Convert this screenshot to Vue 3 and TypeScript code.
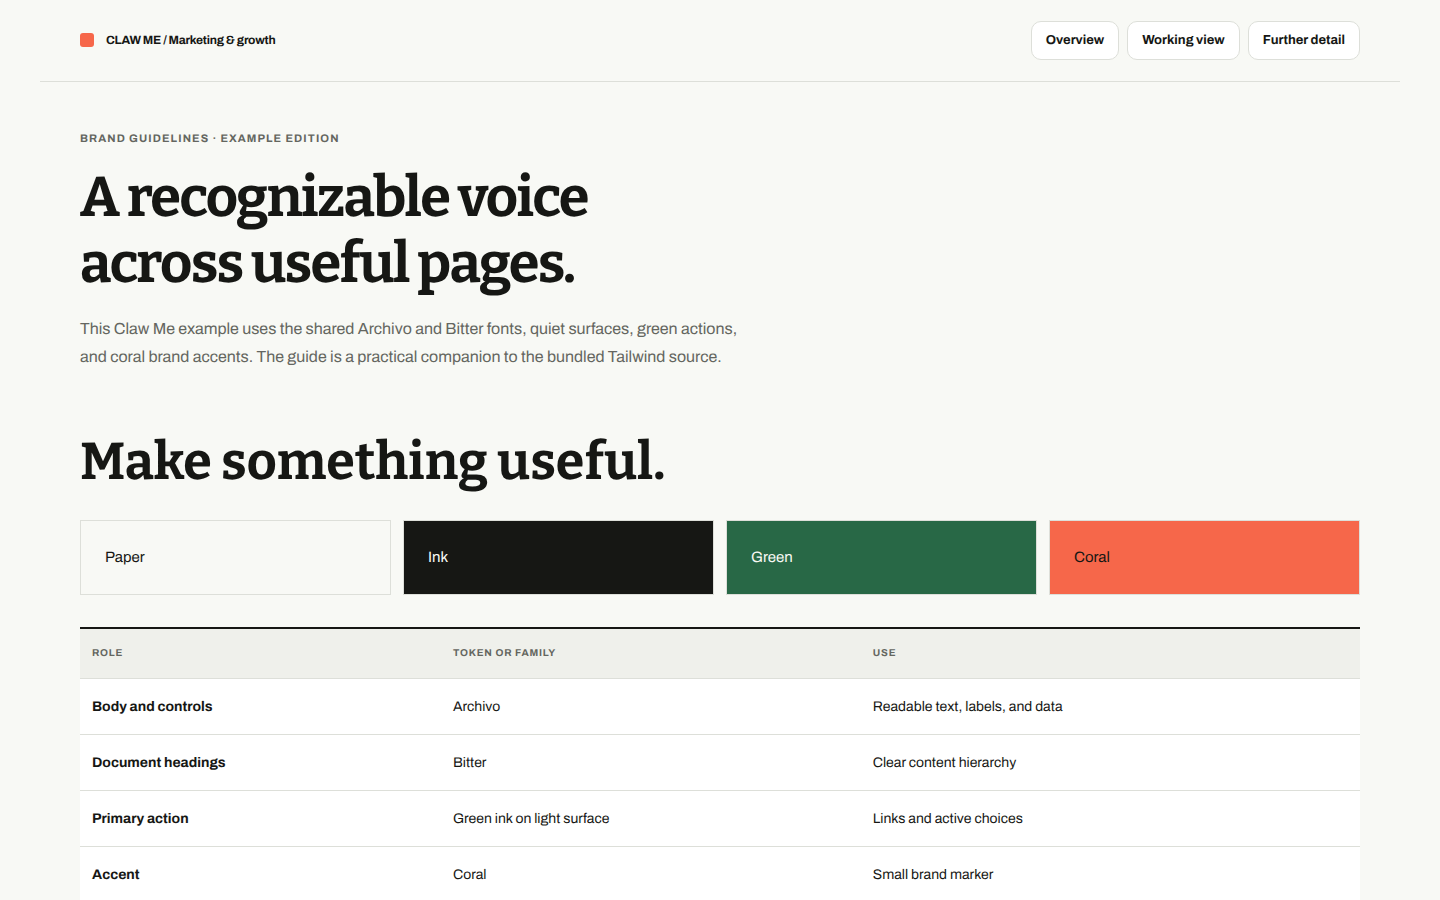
<script setup lang="ts">
interface Swatch {
  name: string
  tone: string
}

interface Row {
  role: string
  token: string
  use: string
}

const links: string[] = ['Overview', 'Working view', 'Further detail']

const swatches: Swatch[] = [
  { name: 'Paper', tone: 'paper' },
  { name: 'Ink', tone: 'ink' },
  { name: 'Green', tone: 'green' },
  { name: 'Coral', tone: 'coral' },
]

const rows: Row[] = [
  { role: 'Body and controls', token: 'Archivo', use: 'Readable text, labels, and data' },
  { role: 'Document headings', token: 'Bitter', use: 'Clear content hierarchy' },
  { role: 'Primary action', token: 'Green ink on light surface', use: 'Links and active choices' },
  { role: 'Accent', token: 'Coral', use: 'Small brand marker' },
]
</script>

<template>
  <div class="page">
    <header class="topbar">
      <div class="brand">
        <span class="mark" aria-hidden="true"></span>
        <span>CLAW ME / Marketing &amp; growth</span>
      </div>
      <nav class="nav" aria-label="Sections">
        <a v-for="link in links" :key="link" class="nav-link" href="#">{{ link }}</a>
      </nav>
    </header>

    <main class="content">
      <section class="intro">
        <p class="eyebrow">Brand guidelines · Example edition</p>
        <h1>A recognizable voice<br />across useful pages.</h1>
        <p class="lead">
          This Claw Me example uses the shared Archivo and Bitter fonts, quiet surfaces, green actions,<br />
          and coral brand accents. The guide is a practical companion to the bundled Tailwind source.
        </p>
      </section>

      <h2>Make something useful.</h2>

      <div class="swatches">
        <div v-for="swatch in swatches" :key="swatch.name" class="swatch" :class="swatch.tone">
          {{ swatch.name }}
        </div>
      </div>

      <table class="tokens">
        <colgroup>
          <col class="col-role" />
          <col class="col-token" />
          <col />
        </colgroup>
        <thead>
          <tr>
            <th scope="col">Role</th>
            <th scope="col">Token or family</th>
            <th scope="col">Use</th>
          </tr>
        </thead>
        <tbody>
          <tr v-for="row in rows" :key="row.role">
            <th scope="row">{{ row.role }}</th>
            <td>{{ row.token }}</td>
            <td>{{ row.use }}</td>
          </tr>
        </tbody>
      </table>
    </main>
  </div>
</template>

<style>
body {
  margin: 0;
  background: #f8f9f5;
}
</style>

<style scoped>
.page {
  padding: 0 40px 48px;
  background: #f8f9f5;
  color: #161714;
  font-family: Archivo, "Liberation Sans", Arial, sans-serif;
  text-rendering: geometricPrecision;
}

.topbar {
  display: flex;
  align-items: flex-start;
  justify-content: space-between;
  padding: 21px 40px;
  border-bottom: 1px solid #dddfd9;
}

.brand {
  display: flex;
  align-items: center;
  gap: 12px;
  font-size: 12px;
  font-weight: 700;
  letter-spacing: -0.02em;
  line-height: 38px;
}

.mark {
  width: 14px;
  height: 14px;
  border-radius: 3px;
  background: #f6674a;
}

.nav {
  display: flex;
  gap: 8px;
}

.nav-link {
  padding: 8px 14px;
  border: 1px solid #dddfd9;
  border-radius: 10px;
  background: #ffffff;
  color: inherit;
  font-size: 13px;
  font-weight: 700;
  line-height: 21px;
  text-decoration: none;
}

.content {
  padding: 48px 40px 0;
}

.eyebrow {
  margin: 0;
  color: #646660;
  font-size: 11px;
  font-weight: 700;
  letter-spacing: 0.1em;
  line-height: 18px;
  text-transform: uppercase;
}

h1,
h2 {
  margin: 0;
  font-family: Bitter, "DejaVu Serif", serif;
  font-weight: 700;
}

h1 {
  margin-top: 17px;
  font-size: 56px;
  letter-spacing: -0.03em;
  line-height: 66px;
}

.lead {
  margin: 19px 0 0;
  color: #646660;
  font-size: 16px;
  line-height: 28px;
}

h2 {
  margin-top: 56px;
  font-size: 52px;
  line-height: 68px;
}

.swatches {
  display: grid;
  grid-template-columns: repeat(4, 1fr);
  gap: 12px;
  margin-top: 24px;
}

.swatch {
  padding: 24px 24px 23px;
  border: 1px solid #dddfd9;
  font-size: 15px;
  line-height: 26px;
}

.ink {
  background: #161714;
  color: #f8f9f5;
}

.green {
  background: #286846;
  color: #f8f9f5;
}

.coral {
  background: #f6674a;
}

.tokens {
  width: 100%;
  margin-top: 32px;
  border-collapse: separate;
  border-spacing: 0;
  border-top: 2px solid #161714;
  background: #ffffff;
  table-layout: fixed;
  text-align: left;
}

.col-role {
  width: 28.2%;
}

.col-token {
  width: 32.8%;
}

.tokens th,
.tokens td {
  padding: 16px 12px;
  border-bottom: 1px solid #dddfd9;
  font-size: 14px;
  line-height: 23px;
}

.tokens thead th {
  padding-bottom: 15px;
  background: #eff0eb;
  color: #646660;
  font-size: 10px;
  letter-spacing: 0.08em;
  line-height: 18px;
  text-transform: uppercase;
}
</style>
